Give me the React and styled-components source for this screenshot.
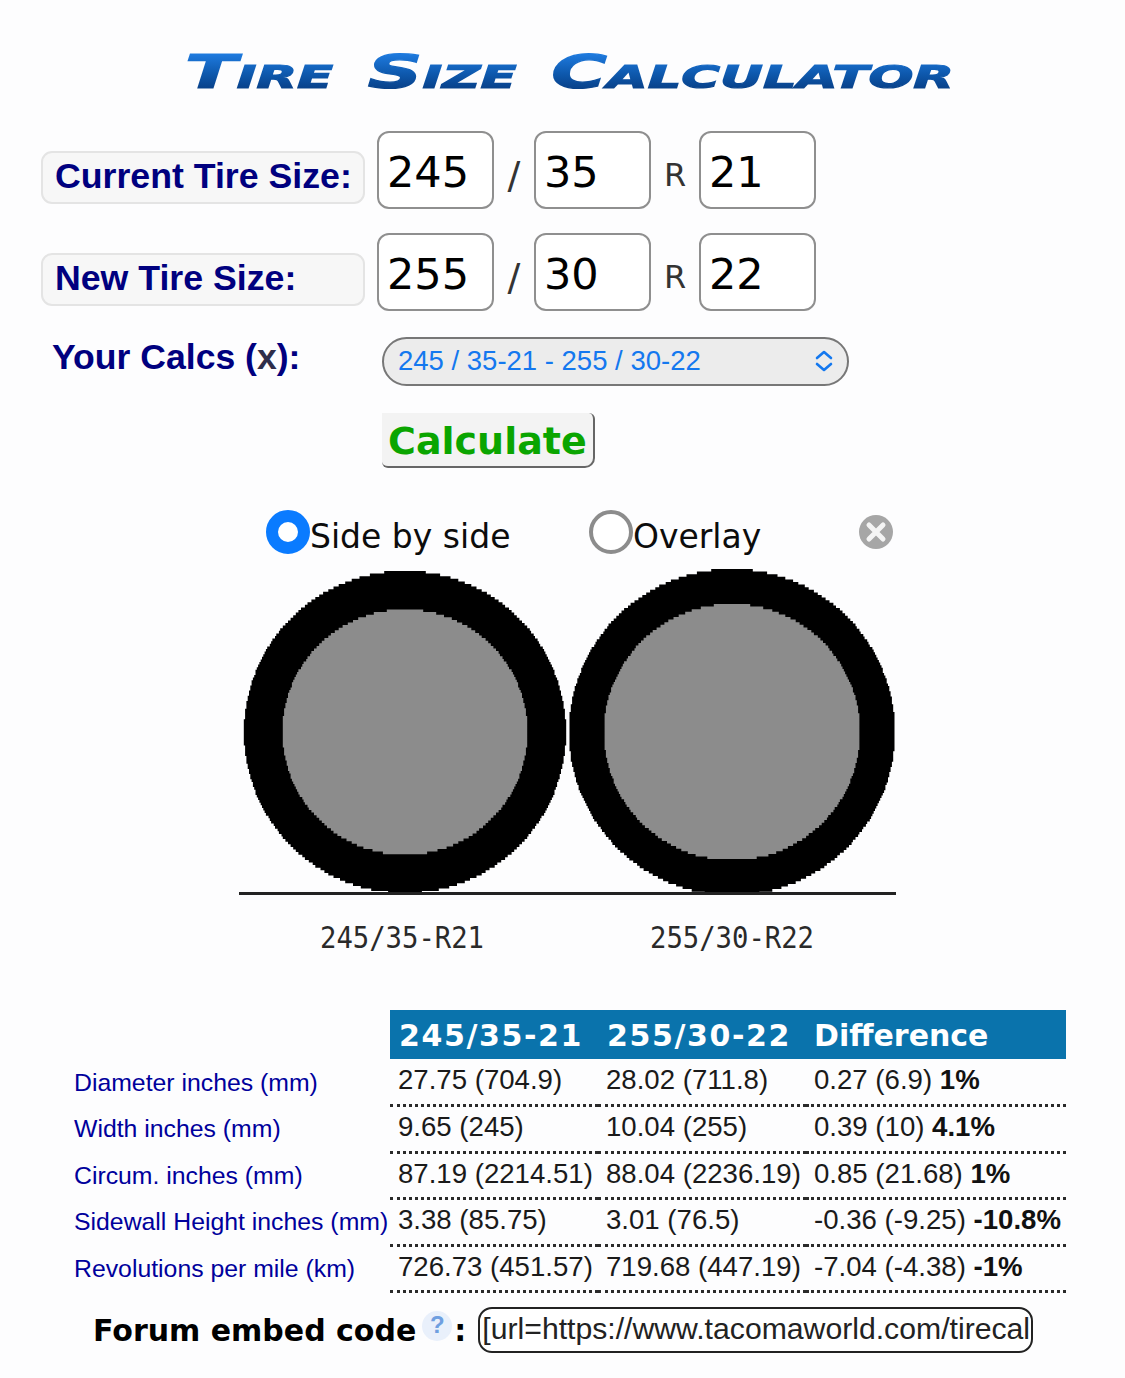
import React from "react";
import styled, { createGlobalStyle } from "styled-components";

const Global = createGlobalStyle`
  html, body { margin: 0; padding: 0; background: #fdfdfe; }
  * { box-sizing: border-box; }
`;

const Page = styled.div`
  width: 1125px;
  height: 1378px;
  overflow: hidden;
  background: #fdfdfe;
  font-family: "Liberation Sans", Arial, sans-serif;
  display: flex;
  flex-direction: column;
`;

const Title = styled.h1`
  margin: 44px 0 0 0;
  height: 87px;
  padding-left: 185px;
  font-family: "DejaVu Sans", sans-serif;
  font-size: 46px;
  line-height: 56px;
  font-weight: 700;
  font-style: italic;
  font-variant: small-caps;
  white-space: pre;
  word-spacing: 5px;
  transform: scaleX(1.65);
  transform-origin: 185px 0;
  -webkit-text-stroke: 1.2px transparent;
  background: linear-gradient(180deg, #1e7ade 18%, #0d57ab 55%, #083f86 82%);
  background-size: 600px 56px;
  background-repeat: no-repeat;
  background-position: 180px 0;
  -webkit-background-clip: text;
  background-clip: text;
  color: transparent;
`;

const SizeRow = styled.div`
  display: flex;
  align-items: center;
  height: 78px;
  margin-left: 41px;
  margin-bottom: ${p => p.$gap}px;
`;

const RowLabel = styled.div`
  width: 324px;
  height: 53px;
  margin-right: 12px;
  margin-top: 14px;
  padding-left: 12px;
  border: 2px solid #e4e4e4;
  border-radius: 11px;
  background: #f7f7f7;
  color: #00007f;
  font-size: 35.7px;
  font-weight: 700;
  line-height: 47px;
  white-space: nowrap;
`;

const SizeBox = styled.div`
  width: 117px;
  height: 78px;
  padding-left: 8px;
  border: 2px solid #8f8f8f;
  border-radius: 12px;
  background: #fff;
  color: #000;
  font-family: "DejaVu Sans", sans-serif;
  font-size: 43px;
  line-height: 78px;
`;

const Sep = styled.span`
  width: ${p => p.$w}px;
  padding-top: 10px;
  text-align: center;
  color: #333;
  font-family: "DejaVu Sans", sans-serif;
  font-size: ${p => p.$size}px;
  line-height: 1;
`;

const CalcsRow = styled.div`
  display: flex;
  align-items: flex-start;
  height: 76px;
  padding-left: 52px;
`;

const CalcsLabel = styled.div`
  width: 330px;
  margin-top: -2px;
  color: #00007f;
  font-size: 35.6px;
  font-weight: 700;
  line-height: 44px;
`;

const CalcsX = styled.span`
  color: #2e2e4a;
`;

const Select = styled.div`
  width: 467px;
  height: 49px;
  display: flex;
  align-items: center;
  justify-content: space-between;
  padding: 0 13px 2px 14px;
  border: 2px solid #777;
  border-radius: 25px;
  background: #ececec;
  color: #1478ef;
  font-size: 27.5px;
`;

const Calculate = styled.div`
  width: 213px;
  height: 55px;
  margin-left: 382px;
  padding-left: 6px;
  border-right: 2px solid #666;
  border-bottom: 2px solid #666;
  border-radius: 0 6px 10px 6px;
  background: #f3f3f3;
  color: #0aa500;
  font-family: "DejaVu Sans", sans-serif;
  font-size: 38px;
  font-weight: 700;
  line-height: 57px;
`;

const ViewRow = styled.div`
  display: flex;
  align-items: center;
  height: 46px;
  margin-top: 41px;
  padding-left: 266px;
`;

const RadioDot = styled.span`
  flex: none;
  width: 44px;
  height: 44px;
  border-radius: 50%;
  background: #fff;
  border: ${p => (p.$on ? "12px solid #0a7bff" : "4px solid #8c8c8c")};
`;

const RadioText = styled.span`
  width: ${p => p.$w}px;
  color: #0c0c0c;
  font-family: "DejaVu Sans", sans-serif;
  font-size: 33px;
  line-height: 46px;
  padding-top: 10px;
  white-space: nowrap;
`;

const CloseIcon = styled.svg`
  flex: none;
  margin-left: -1px;
`;

const Chart = styled.svg`
  display: block;
  flex: none;
  margin: 11px 0 0 239px;
`;

const ChartLabel = styled.text`
  font-family: "DejaVu Sans Mono", monospace;
  font-size: 31px;
  fill: #2a2a2a;
`;

const Table = styled.table`
  margin: 29px 0 0 59px;
  width: 1007px;
  table-layout: fixed;
  border-collapse: collapse;
`;

const HeadCell = styled.th`
  height: 49px;
  padding: 2px 0 0 ${p => p.$pad || 9}px;
  background: #0a73ac;
  color: #fff;
  font-family: "DejaVu Sans", sans-serif;
  font-size: 30px;
  letter-spacing: ${p => p.$ls || 0}px;
  font-weight: 700;
  text-align: left;
  white-space: nowrap;
`;

const RowName = styled.td`
  height: 46.5px;
  padding: 1px 0 0 15px;
  color: #00009c;
  font-size: 24.8px;
  white-space: nowrap;
`;

const Cell = styled.td`
  height: 46.5px;
  padding: 0 0 3px 8px;
  border-bottom: 3px dotted #2a2a2a;
  color: #1a1a1a;
  font-size: 27.6px;
  white-space: nowrap;
`;

const Pct = styled.b`
  font-weight: 700;
  color: #111;
`;

const EmbedRow = styled.div`
  display: flex;
  align-items: center;
  margin: 14px 0 0 93px;
  height: 46px;
`;

const EmbedLabel = styled.span`
  color: #000;
  font-family: "DejaVu Sans", sans-serif;
  font-size: 30px;
  font-weight: 700;
  white-space: pre;
`;

const Help = styled.span`
  flex: none;
  width: 30px;
  height: 30px;
  margin: -8px 2px 0 6px;
  border-radius: 50%;
  background: #e9f0fb;
  color: #6f9fe0;
  font-size: 24px;
  font-weight: 700;
  line-height: 28px;
  text-align: center;
`;

const EmbedBox = styled.div`
  width: 555px;
  height: 46px;
  margin-left: 12px;
  padding-left: 2px;
  border: 2px solid #222;
  border-radius: 14px;
  background: #fff;
  color: #222;
  font-size: 30.2px;
  line-height: 40px;
  white-space: nowrap;
  overflow: hidden;
`;

// Stepped disc so the tire keeps the blocky, upscaled edge of the original image
function disc(cx, cy, r, step) {
  let d = "";
  for (let y = cy - r; y < cy + r; y += step) {
    const mid = y + step / 2 - cy;
    const half = Math.sqrt(Math.max(0, r * r - mid * mid));
    const w = Math.round((half * 2) / step) * step;
    d += `M${cx - w / 2} ${y}h${w}v${step + 0.3}h${-w}z`;
  }
  return d;
}

const rows = [
  ["Diameter inches (mm)", "27.75 (704.9)", "28.02 (711.8)", "0.27 (6.9) ", "1%"],
  ["Width inches (mm)", "9.65 (245)", "10.04 (255)", "0.39 (10) ", "4.1%"],
  ["Circum. inches (mm)", "87.19 (2214.51)", "88.04 (2236.19)", "0.85 (21.68) ", "1%"],
  ["Sidewall Height inches (mm)", "3.38 (85.75)", "3.01 (76.5)", "-0.36 (-9.25) ", "-10.8%"],
  ["Revolutions per mile (km)", "726.73 (451.57)", "719.68 (447.19)", "-7.04 (-4.38) ", "-1%"],
];

function TireChart() {
  const ox = 239;
  const oy = 565;
  return (
    <Chart width="657" height="415" viewBox={`${ox} ${oy} 657 415`}>
      <path d={disc(405, 731, 161, 2.6)} fill="#000" />
      <path d={disc(405, 731, 122.5, 2.6)} fill="#8c8c8c" />
      <path d={disc(732, 731, 163, 2.6)} fill="#000" />
      <path d={disc(732, 731, 128, 2.6)} fill="#8c8c8c" />
      <rect x="239" y="891" width="657" height="3" fill="#222" />
      <ChartLabel x="320" y="947" textLength="164" lengthAdjust="spacingAndGlyphs">245/35-R21</ChartLabel>
      <ChartLabel x="650" y="947" textLength="164" lengthAdjust="spacingAndGlyphs">255/30-R22</ChartLabel>
    </Chart>
  );
}

export default function App() {
  return (
    <Page>
      <Global />
      <Title>Tire Size Calculator</Title>
      <SizeRow $gap={24}>
        <RowLabel>Current Tire Size:</RowLabel>
        <SizeBox>245</SizeBox>
        <Sep $w={40} $size={38}>/</Sep>
        <SizeBox>35</SizeBox>
        <Sep $w={48} $size={32}>R</Sep>
        <SizeBox>21</SizeBox>
      </SizeRow>
      <SizeRow $gap={26}>
        <RowLabel>New Tire Size:</RowLabel>
        <SizeBox>255</SizeBox>
        <Sep $w={40} $size={38}>/</Sep>
        <SizeBox>30</SizeBox>
        <Sep $w={48} $size={32}>R</Sep>
        <SizeBox>22</SizeBox>
      </SizeRow>
      <CalcsRow>
        <CalcsLabel>Your Calcs (<CalcsX>x</CalcsX>):</CalcsLabel>
        <Select>
          245 / 35-21 - 255 / 30-22
          <svg width="20" height="24" viewBox="0 0 20 24" fill="none" stroke="#1478ef" strokeWidth="2.6" strokeLinecap="round" strokeLinejoin="round">
            <path d="M3 9l7-6 7 6" />
            <path d="M3 15l7 6 7-6" />
          </svg>
        </Select>
      </CalcsRow>
      <Calculate>Calculate</Calculate>
      <ViewRow>
        <RadioDot $on />
        <RadioText $w={279}>Side by side</RadioText>
        <RadioDot />
        <RadioText $w={226}>Overlay</RadioText>
        <CloseIcon width="36" height="36" viewBox="0 0 36 36">
          <circle cx="18" cy="18" r="17" fill="#a6a6a6" />
          <path d="M11 11l14 14M25 11l-14 14" stroke="#f4f4f4" strokeWidth="5" strokeLinecap="round" />
        </CloseIcon>
      </ViewRow>
      <TireChart />
      <Table>
        <colgroup>
          <col style={{ width: 331 }} />
          <col style={{ width: 208 }} />
          <col style={{ width: 208 }} />
          <col style={{ width: 260 }} />
        </colgroup>
        <thead>
          <tr>
            <th />
            <HeadCell $ls={1.6}>245/35-21</HeadCell>
            <HeadCell $ls={1.6}>255/30-22</HeadCell>
            <HeadCell $pad={8}>Difference</HeadCell>
          </tr>
        </thead>
        <tbody>
          {rows.map(r => (
            <tr key={r[0]}>
              <RowName>{r[0]}</RowName>
              <Cell>{r[1]}</Cell>
              <Cell>{r[2]}</Cell>
              <Cell>{r[3]}<Pct>{r[4]}</Pct></Cell>
            </tr>
          ))}
        </tbody>
      </Table>
      <EmbedRow>
        <EmbedLabel>Forum embed code</EmbedLabel>
        <Help>?</Help>
        <EmbedLabel>:</EmbedLabel>
        <EmbedBox>[url=https://www.tacomaworld.com/tirecal</EmbedBox>
      </EmbedRow>
    </Page>
  );
}
